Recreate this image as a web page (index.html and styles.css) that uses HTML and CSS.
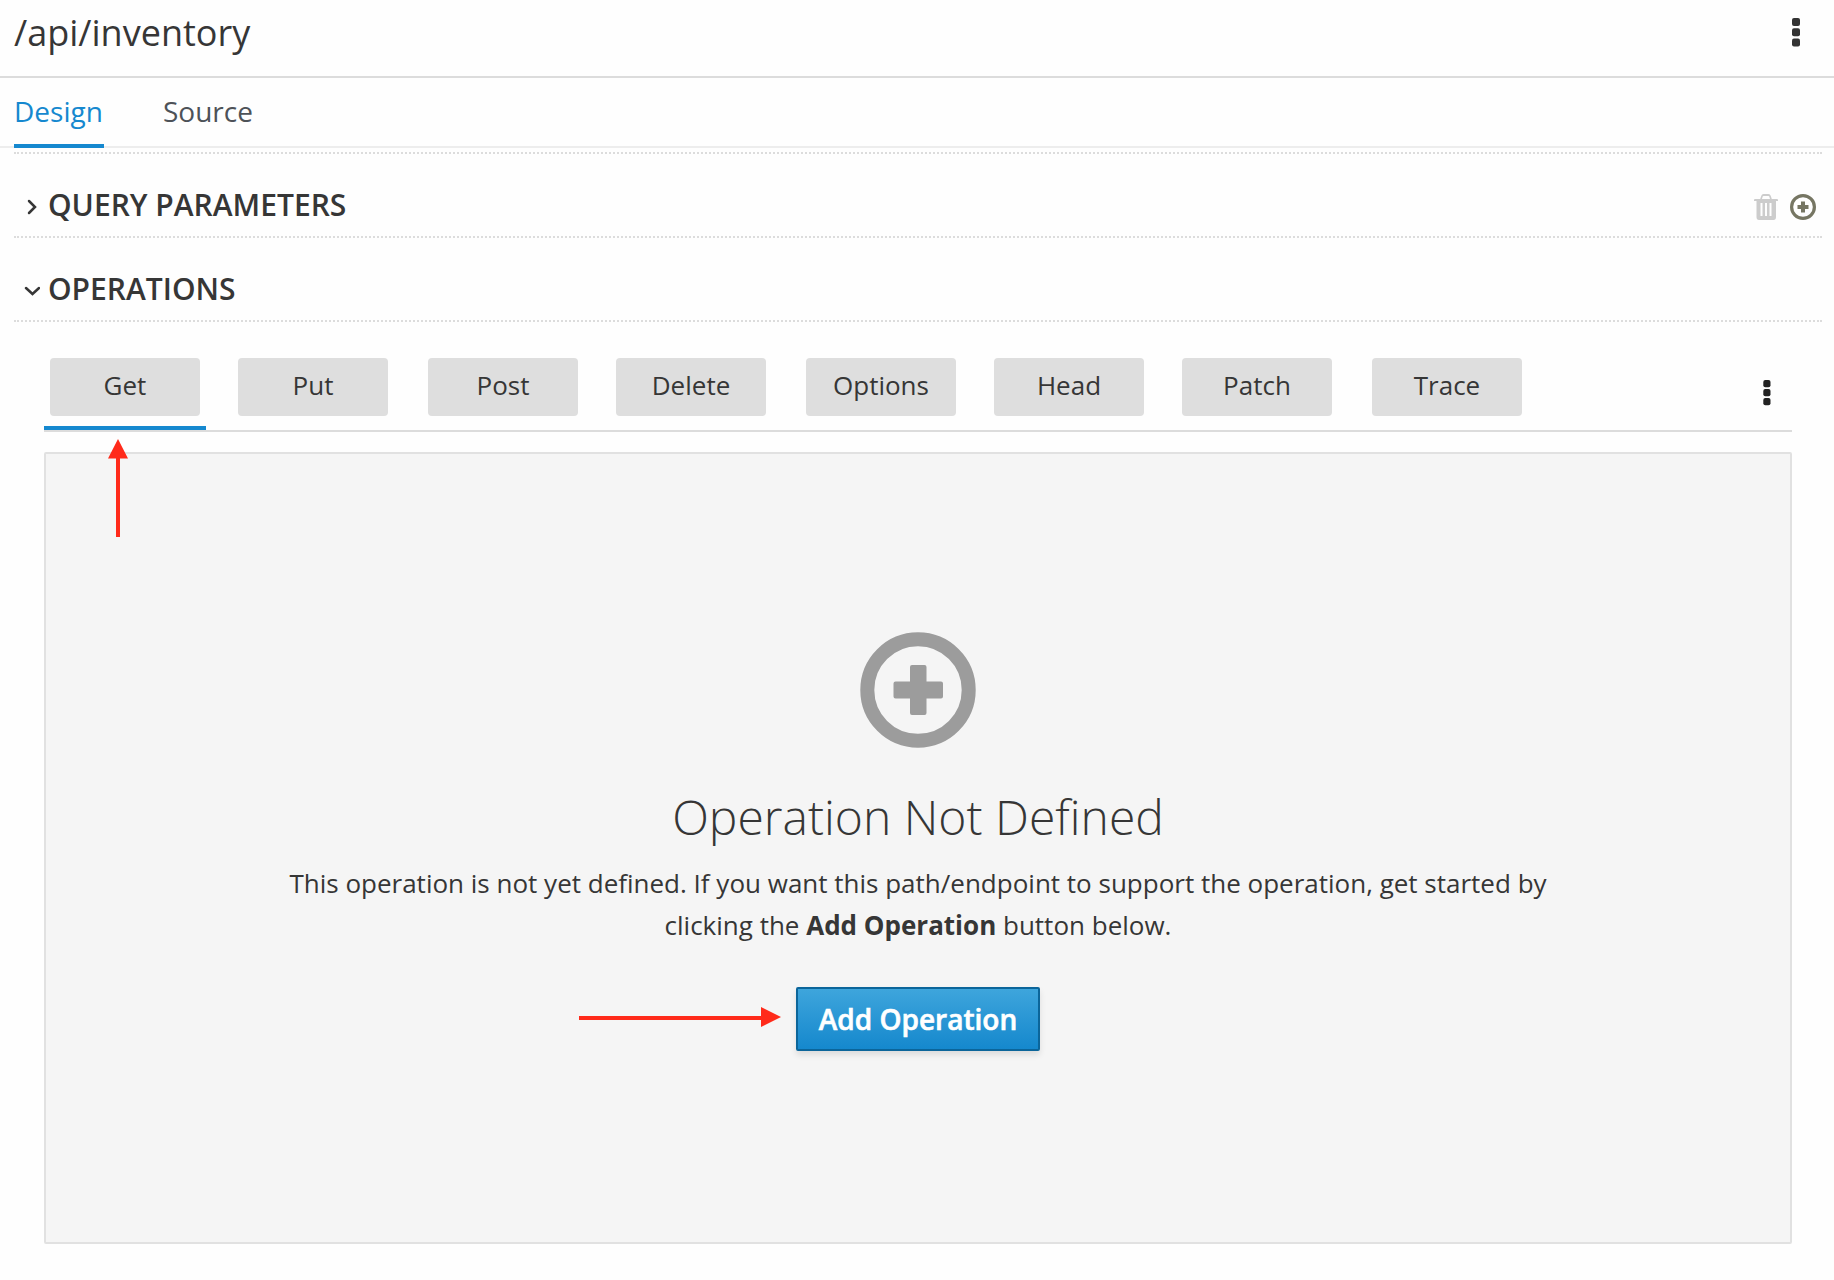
FILE: index.html
```html
<!DOCTYPE html>
<html lang="en">
<head>
<meta charset="utf-8">
<title>/api/inventory</title>
<link rel="stylesheet" href="styles.css">
</head>
<body>
<header class="page-header">
  <h1 class="page-title">/api/inventory</h1>
  <svg class="kebab" width="8" height="29" viewBox="0 0 8 29"><rect y="0" width="8" height="8" rx="2"/><rect y="10.3" width="8" height="8" rx="2"/><rect y="20.6" width="8" height="8" rx="2"/></svg>
</header>
<nav class="view-tabs">
  <a class="view-tab active">Design</a>
  <a class="view-tab">Source</a>
</nav>
<main class="content">
  <section class="section-head">
    <svg class="chevron" width="16" height="16" viewBox="0 0 16 16"><path d="M5 2 L11 8 L5 14"/></svg>
    <h2 class="section-title">QUERY PARAMETERS</h2>
    <div class="section-actions">
      <svg class="trash" width="24" height="26" viewBox="0 0 24 26"><path fill-rule="evenodd" d="M1 5H6.2L7.2 2Q7.8 0 9.5 0H14.5Q16.2 0 16.8 2L17.800 5H23Q24 5 24 6V7H22V23Q22 26 19.500 26H5Q2.500 26 2.500 23V7H0V6Q0 5 1 5ZM8 5H16L15.300 2.500Q15.100 2 14.500 2H9.500Q8.900 2 8.700 2.500ZM6.500 9V22H8.500V9ZM11 9V22H13V9ZM15.500 9V22H17.500V9Z"/></svg>
      <svg class="add" width="26" height="26" viewBox="0 0 26 26"><circle cx="13" cy="13" r="11.400"/><path d="M11 7.500h4v3.500h3.500v4H15v3.500h-4V15H7.500v-4H11z"/></svg>
    </div>
  </section>
  <section class="section-head">
    <svg class="chevron" width="16" height="16" viewBox="0 0 16 16"><path d="M2 5 L8.500 11 L15 5"/></svg>
    <h2 class="section-title">OPERATIONS</h2>
  </section>
  <div class="operations">
    <div class="method-tabs">
      <div class="method active"><button class="method-btn">Get</button></div>
      <div class="method wide"><button class="method-btn">Put</button></div>
      <div class="method"><button class="method-btn">Post</button></div>
      <div class="method wide"><button class="method-btn">Delete</button></div>
      <div class="method"><button class="method-btn">Options</button></div>
      <div class="method"><button class="method-btn">Head</button></div>
      <div class="method wide"><button class="method-btn">Patch</button></div>
      <div class="method"><button class="method-btn">Trace</button></div>
      <svg class="kebab small" width="8" height="26" viewBox="0 0 8 26"><rect x=".3" y="0" width="7.200" height="7.200" rx="2"/><rect x=".3" y="9" width="7.200" height="7.200" rx="2"/><rect x=".3" y="18" width="7.200" height="7.200" rx="2"/></svg>
      <svg class="arrow arrow-up" width="20" height="98" viewBox="0 0 20 98"><path d="M10 0L20 19.500H12V98H8V19.500H0z"/></svg>
    </div>
    <div class="blank-slate">
      <svg class="blank-icon" width="116" height="116" viewBox="0 0 116 116"><circle cx="58" cy="58" r="50.700"/><path d="M52 33h12.500q2 0 2 2v14.500H81q2 0 2 2v13q0 2-2 2H66.500V81q0 2-2 2H52q-2 0-2-2V66.500H35.500q-2 0-2-2v-13q0-2 2-2H50V35q0-2 2-2z"/></svg>
      <h3 class="blank-title">Operation Not Defined</h3>
      <p class="blank-text">This operation is not yet defined. If you want this path/endpoint to support the operation, get started by clicking the <strong>Add Operation</strong> button below.</p>
      <div class="blank-action">
        <button class="primary">Add Operation</button>
        <svg class="arrow arrow-right" width="202" height="20" viewBox="0 0 202 20"><path d="M202 10L182 0V9H0V13H182V20z"/></svg>
      </div>
    </div>
  </div>
</main>
</body>
</html>
```

FILE: styles.css
```css
* { box-sizing: border-box; }
body {
  margin: 0;
  height: 1280px;
  overflow: hidden;
  background: #fefefe;
  color: #363636;
  font-family: "Open Sans", "Noto Sans", sans-serif;
}
h1, h2, h3, p { margin: 0; }
button { font-family: inherit; padding: 0; }

.page-header {
  display: flex;
  align-items: flex-start;
  justify-content: space-between;
  height: 78px;
  padding: 0 34px 0 14px;
  border-bottom: 2px solid #dcdcdc;
}
.page-title { font-size: 36px; font-weight: 400; line-height: 66px; }
.kebab { display: block; margin-top: 17.5px; fill: #333; }

.view-tabs {
  display: flex;
  gap: 59px;
  height: 70px;
  padding: 0 14px;
  border-bottom: 2px solid #ededed;
}
.view-tab {
  height: 70px;
  font-size: 28px;
  line-height: 66px;
  color: #4d5258;
}
.view-tab.active { width: 90px; color: #1588cf; border-bottom: 4px solid #1588cf; }

.content {
  margin: 4px 12px 0 14px;
  border-top: 2px dotted #dcdcdc;
}
.section-head {
  display: flex;
  align-items: center;
  height: 84px;
  padding: 20px 6px 0 10px;
  border-bottom: 2px dotted #dcdcdc;
}
.chevron {
  margin: 4px 8px 0 0;
  fill: none;
  stroke: #363636;
  stroke-width: 2.500;
  stroke-linecap: round;
}
.section-title { font-size: 30px; font-weight: 600; line-height: 40px; }
.section-actions { display: flex; gap: 12px; margin: 4px 0 0 auto; }
.trash { fill: #ccc; }
.add { fill: #767663; }
.add circle { fill: none; stroke: #767663; stroke-width: 3.200; }

.operations { padding: 32px 30px 0; }
.method-tabs {
  position: relative;
  display: flex;
  height: 78px;
  padding-right: 21px;
  border-bottom: 2px solid #dcdcdc;
}
.method { height: 76px; padding: 4px 6px 0; margin-right: 26px; }
.method.wide { margin-right: 28px; }
.method.active { border-bottom: 4px solid #1588cf; }
.method-btn {
  display: block;
  width: 150px;
  height: 58px;
  padding-bottom: 4px;
  border: 0;
  border-radius: 4px;
  background: #dedede;
  color: #363636;
  font-size: 26px;
  line-height: 54px;
}
.kebab.small { margin: 26px 0 0 auto; fill: #222; }

.blank-slate {
  display: flex;
  flex-direction: column;
  align-items: center;
  height: 792px;
  margin-top: 20px;
  padding-top: 178px;
  border: 2px solid #e1e1e1;
  border-radius: 2px;
  background: #f5f5f5;
  text-align: center;
}
.blank-icon { fill: #9c9c9c; }
.blank-icon circle { fill: none; stroke: #9c9c9c; stroke-width: 14; }
.blank-title { margin-top: 37px; font-size: 48px; font-weight: 300; line-height: 64px; }
.blank-text { width: 1300px; margin-top: 13px; font-size: 26px; line-height: 42px; }
.blank-text strong { font-weight: 700; }
.blank-action { position: relative; margin-top: 41px; }
.primary {
  display: block;
  width: 244px;
  height: 64px;
  border: 2px solid #0b659a;
  border-radius: 2px;
  background: linear-gradient(#3ea5dc, #1588cd);
  box-shadow: 0 4px 6px rgba(3, 3, 3, .1);
  color: #fff;
  font-size: 28px;
  font-weight: 600;
  line-height: 58px;
  -webkit-text-stroke: .6px #fff;
}
.arrow { position: absolute; fill: #ff2a1a; }
.arrow-up { left: 64px; top: 85px; }
.arrow-right { right: 259px; top: 20px; }
```
